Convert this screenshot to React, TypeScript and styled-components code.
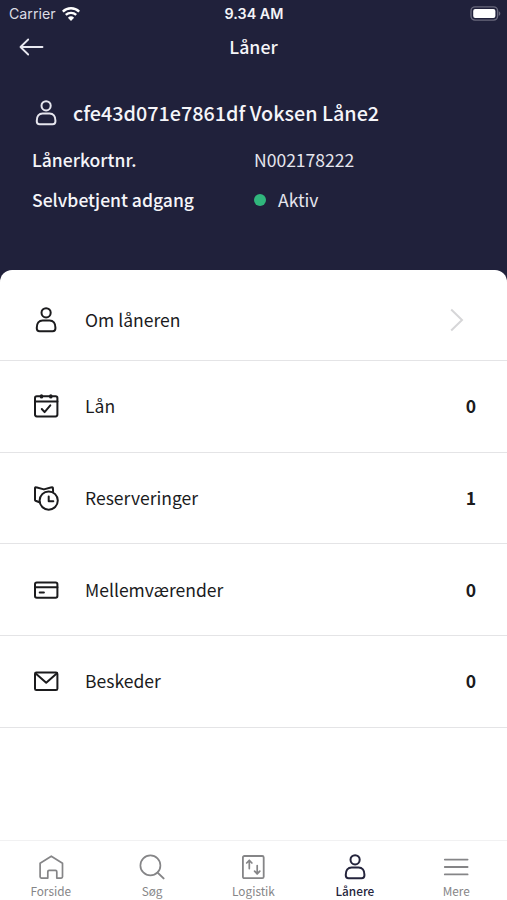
import React from "react";
import styled, { createGlobalStyle } from "styled-components";

const Global = createGlobalStyle`
  * { box-sizing: border-box; }
  body { margin: 0; background: #fff; font-family: "Noto Sans CJK SC", "Open Sans", sans-serif; }
`;

const Screen = styled.div`
  width: 507px;
  height: 900px;
  display: flex;
  flex-direction: column;
  overflow: hidden;
  background: #20213b;
`;

const StatusBar = styled.div`
  height: 27px;
  padding: 0 6px 0 9px;
  display: grid;
  grid-template-columns: 1fr auto 1fr;
  align-items: center;
  font: 400 14.2px/27px Inter, sans-serif;
  color: #dcdce4;
`;

const Carrier = styled.div`
  display: flex;
  align-items: center;
  gap: 6px;
`;

const Clock = styled.div`
  margin-left: -2px;
  font-size: 14.3px;
  font-weight: 600;
  color: #f4f4f8;
`;

const Battery = styled.div`
  display: flex;
  justify-content: flex-end;
`;

const NavBar = styled.header`
  height: 40px;
  padding: 0 19px;
  display: grid;
  grid-template-columns: 1fr auto 1fr;
  align-items: center;
`;

const BackButton = styled.button`
  width: 26px;
  height: 20px;
  padding: 0;
  border: 0;
  background: none;
  display: flex;
  align-items: center;
`;

const Title = styled.h1`
  margin: 0 0 2px;
  font-size: 17.7px;
  line-height: 26px;
  font-weight: 500;
  color: #f5f5f9;
`;

const Profile = styled.section`
  height: 202.5px;
  flex: none;
  padding: 29px 32px 0;
  color: #e6e6ee;
`;

const NameRow = styled.div`
  height: 34px;
  display: flex;
  align-items: center;
  gap: 13px;
`;

const Name = styled.h2`
  margin: 0;
  font-size: 19.75px;
  font-weight: 500;
  line-height: 30px;
  color: #f5f5f9;
  white-space: nowrap;
`;

const Details = styled.dl`
  margin: 10px 0 0;
  display: grid;
  grid-template-columns: 222px 1fr;
  grid-auto-rows: 40px;
  align-items: center;
  font-size: 17.55px;
  line-height: 26px;
`;

const Term = styled.dt`
  margin-bottom: 1px;
  font-weight: 500;
  color: #f5f5f9;
`;

const Value = styled.dd`
  margin: 0 0 1px;
  display: flex;
  align-items: center;
  gap: 12px;
`;

const Dot = styled.span`
  width: 12px;
  height: 12px;
  border-radius: 50%;
  background: #30b67c;
`;

const Sheet = styled.main`
  flex: 1;
  background: #fff;
  border-radius: 12px 12px 0 0;
`;

const Row = styled.div<{ $first?: boolean }>`
  height: ${(p) => (p.$first ? 91.5 : 91.7)}px;
  padding: ${(p) => (p.$first ? 9.5 : 0)}px 31px 0 32px;
  display: grid;
  grid-template-columns: 28px 1fr auto;
  column-gap: 25px;
  align-items: center;
  border-bottom: 1px solid #e4e4e6;
  font-size: 17.55px;
  line-height: 26px;
  color: #1b1b1d;
`;

const Label = styled.span`
  white-space: nowrap;
`;

const Count = styled.span`
  font-weight: 700;
`;

const ChevronSlot = styled.span`
  display: flex;
  padding-right: 12px;
`;

const TabBar = styled.nav`
  height: 60px;
  flex: none;
  display: grid;
  grid-template-columns: repeat(5, 1fr);
  background: #fff;
  border-top: 1px solid #f1f1f2;
`;

const Tab = styled.div<{ $active?: boolean }>`
  padding-top: 12px;
  display: flex;
  flex-direction: column;
  align-items: center;
  gap: 1px;
  font-size: 11.8px;
  line-height: 18px;
  font-weight: ${(p) => (p.$active ? 500 : 400)};
  color: ${(p) => (p.$active ? "#24243c" : "#858587")};
`;

const Icon = styled.svg`
  display: block;
  flex: none;
  fill: none;
  stroke: currentColor;
  stroke-width: 2;
  stroke-linecap: round;
  stroke-linejoin: round;
`;

const PersonIcon = () => (
  <Icon width="28" height="28" viewBox="0 0 28 28">
    <circle cx="14.1" cy="6.8" r="4.6" />
    <path d="M10.6 14.4h7c3.6 0 5.8 3.2 5.8 7v1.1c0 1.8-1 2.7-2.8 2.7h-13c-1.8 0-2.8-.9-2.8-2.7v-1.1c0-3.8 2.2-7 5.8-7Z" />
  </Icon>
);
const CalendarIcon = () => (
  <Icon width="28" height="28" viewBox="0 0 28 28">
    <rect x="3" y="4.2" width="22.4" height="20.2" rx="1.8" />
    <path d="M3 9.4h22.4M9.8 17l2.8 3.1 5.7-6.8" />
    <path d="M9.5 3.9v1M18.8 3.9v1" strokeWidth="3.4" />
  </Icon>
);
const ReserveIcon = () => (
  <Icon width="28" height="28" viewBox="0 0 28 28">
    <circle cx="16.7" cy="16.6" r="9.1" />
    <path d="M16.7 12.5v4.7h4.6M7.4 18.3l-3.8-1.5c-.4-.2-.6-.5-.6-.9V4.1c0-.7.5-1 1.1-.8l7.8 2.1 7.8-2.1c.6-.2 1.1.1 1.2.7l.2 3.4" />
  </Icon>
);
const CardIcon = () => (
  <Icon width="28" height="28" viewBox="0 0 28 28">
    <rect x="3" y="6.4" width="22.4" height="15.4" rx="1.8" />
    <path d="M3 11.3h22.4M7.7 16.6h4.2" />
  </Icon>
);
const MailIcon = () => (
  <Icon width="28" height="28" viewBox="0 0 28 28">
    <rect x="3" y="5.5" width="22.4" height="17.6" rx="1.4" />
    <path d="m3.7 6.5 10.5 9.3L24.7 6.5" />
  </Icon>
);

const items = [
  { label: "Lån", count: 0, icon: <CalendarIcon /> },
  { label: "Reserveringer", count: 1, icon: <ReserveIcon /> },
  { label: "Mellemværender", count: 0, icon: <CardIcon /> },
  { label: "Beskeder", count: 0, icon: <MailIcon /> },
];

const tabs = [
  { label: "Forside", icon: <Icon width="28" height="28" viewBox="0 0 28 28"><path d="M3.1 10.2 14.3 3.2l11.2 7v13.6c0 .8-.5 1.3-1.3 1.3h-4.4v-6.4c0-.8-.5-1.3-1.3-1.3h-6.4c-.8 0-1.3.5-1.3 1.3v6.4H4.4c-.8 0-1.3-.5-1.3-1.3Z" strokeWidth="1.7" /></Icon> },
  { label: "Søg", icon: <Icon width="28" height="28" viewBox="0 0 28 28"><circle cx="12.4" cy="12.4" r="10" strokeWidth="1.7" /><path d="m19.6 19.6 6 5.8" /></Icon> },
  { label: "Logistik", icon: <Icon width="28" height="28" viewBox="0 0 28 28"><rect x="3.9" y="3" width="20.8" height="22.2" rx="1.5" strokeWidth="1.8" /><path d="M10.3 15.6V7.3m-2.6 2.7 2.6-2.7 2.6 2.7M18.2 12.6v8.3m-2.6-2.7 2.6 2.7 2.6-2.7" strokeWidth="1.7" /></Icon> },
  { label: "Lånere", icon: <PersonIcon />, active: true },
  { label: "Mere", icon: <Icon width="28" height="28" viewBox="0 0 28 28"><path d="M2.8 6.6h22.8M2.8 14h22.8M2.8 21.4h22.8" strokeWidth="1.8" /></Icon> },
];

export default function App() {
  return (
    <Screen>
      <Global />
      <StatusBar>
        <Carrier>
          Carrier
          <svg width="18" height="14" viewBox="0 0 18 14" fill="none" stroke="#fff" strokeWidth="2.4">
            <path d="M.8 4.6a11.8 11.8 0 0 1 16.4 0M3.8 7.9a7.6 7.6 0 0 1 10.4 0" />
            <path d="M9 14 5.9 10.7a4.5 4.5 0 0 1 6.2 0Z" fill="#fff" stroke="none" />
          </svg>
        </Carrier>
        <Clock>9.34 AM</Clock>
        <Battery>
          <svg width="31" height="15" viewBox="0 0 31 15">
            <rect x="1" y=".9" width="26.6" height="13.2" rx="4" fill="none" stroke="#68687c" strokeWidth="1.4" />
            <rect x="3.2" y="3" width="22.2" height="9" rx="2" fill="#fff" />
            <path d="M28.8 5.2c2 .8 2 3.8 0 4.6Z" fill="#68687c" />
          </svg>
        </Battery>
      </StatusBar>
      <NavBar>
        <BackButton aria-label="Tilbage">
          <svg width="25" height="18" viewBox="0 0 25 18" fill="none" stroke="#e9e9f1" strokeWidth="1.8" strokeLinecap="round" strokeLinejoin="round">
            <path d="M23.5 9H1.5m7.7-7.5L1.5 9l7.7 7.5" />
          </svg>
        </BackButton>
        <Title>Låner</Title>
      </NavBar>
      <Profile>
        <NameRow>
          <PersonIcon />
          <Name>cfe43d071e7861df Voksen Låne2</Name>
        </NameRow>
        <Details>
          <Term>Lånerkortnr.</Term>
          <Value>N002178222</Value>
          <Term>Selvbetjent adgang</Term>
          <Value><Dot />Aktiv</Value>
        </Details>
      </Profile>
      <Sheet>
        <Row $first>
          <PersonIcon />
          <Label>Om låneren</Label>
          <ChevronSlot>
            <svg width="14" height="24" viewBox="0 0 14 24" fill="none" stroke="#d6d6d8" strokeWidth="2">
              <path d="m1.2 1.5 10.8 10.5L1.2 22.5" />
            </svg>
          </ChevronSlot>
        </Row>
        {items.map((it) => (
          <Row key={it.label}>
            {it.icon}
            <Label>{it.label}</Label>
            <Count>{it.count}</Count>
          </Row>
        ))}
      </Sheet>
      <TabBar>
        {tabs.map((t) => (
          <Tab key={t.label} $active={t.active}>
            {t.icon}
            <span>{t.label}</span>
          </Tab>
        ))}
      </TabBar>
    </Screen>
  );
}
